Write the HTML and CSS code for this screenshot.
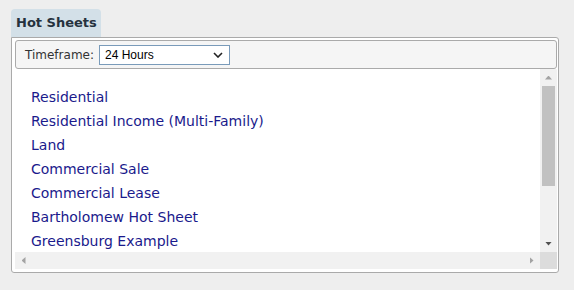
FILE: index.html
```html
<!DOCTYPE html>
<html lang="en">

<head>
    <meta charset="UTF-8">
    <meta name="viewport" content="width=device-width, initial-scale=1.0">
    <title>Hot Sheets</title>
    <link rel="stylesheet" href="styles.css">
</head>

<body>
    <div class="widget">
        <div class="tab">Hot Sheets</div>
        <div class="panel">
            <div class="toolbar">
                <label for="timeframe">Timeframe:</label>
                <div class="picker-wrap">
                    <select id="timeframe" class="picker">
                        <option>24 Hours</option>
                        <option>3 Days</option>
                        <option>7 Days</option>
                        <option>30 Days</option>
                    </select>
                    <svg class="chevron" width="10" height="6" viewBox="0 0 10 6">
                        <polyline points="1,1 5,5 9,1" fill="none" stroke="#222" stroke-width="1.6"/>
                    </svg>
                </div>
            </div>
            <div class="scroll-area">
                <div class="viewport">
                    <ul class="sheets">
                        <li><a href="#">Residential</a></li>
                        <li><a href="#">Residential Income (Multi-Family)</a></li>
                        <li><a href="#">Land</a></li>
                        <li><a href="#">Commercial Sale</a></li>
                        <li><a href="#">Commercial Lease</a></li>
                        <li><a href="#">Bartholomew Hot Sheet</a></li>
                        <li><a href="#">Greensburg Example</a></li>
                    </ul>
                </div>
                <div class="vbar">
                    <div class="sb-btn"><span class="arrow up off"></span></div>
                    <div class="sb-track">
                        <div class="sb-thumb"></div>
                    </div>
                    <div class="sb-btn"><span class="arrow down"></span></div>
                </div>
                <div class="hbar">
                    <div class="sb-btn"><span class="arrow left off"></span></div>
                    <div class="sb-track"></div>
                    <div class="sb-btn"><span class="arrow right off"></span></div>
                </div>
                <div class="sb-corner"></div>
            </div>
        </div>
    </div>
</body>

</html>
```

FILE: styles.css
```css
body {
    margin: 0;
    background-color: #eeeeee;
    font-family: "DejaVu Sans", Verdana, sans-serif;
}

.widget {
    padding: 9px 15px 0 11px;
}

.tab {
    display: inline-block;
    background-color: #d3e0e8;
    color: #26323e;
    font-size: 13px;
    font-weight: bold;
    padding: 6px 4px 6px 5px;
    border-radius: 4px 4px 0 0;
    line-height: 16px;
}

.panel {
    background-color: #fff;
    border: 1px solid #aaaaaa;
    border-radius: 0 3px 3px 3px;
    padding: 2px 1px 3px 3px;
}

.toolbar {
    background-color: #f5f5f5;
    border: 1px solid #aaaaaa;
    border-radius: 3px;
    height: 27px;
    display: flex;
    align-items: center;
    padding-left: 9px;
    font-size: 12px;
    color: #333;
}

.toolbar label {
    margin-right: 5px;
}

.picker-wrap {
    position: relative;
    height: 20px;
}

.picker {
    appearance: none;
    -webkit-appearance: none;
    width: 131px;
    height: 20px;
    margin: 0;
    padding: 0 0 0 5px;
    border: 1px solid #7a9bba;
    border-radius: 0;
    font-family: "Liberation Sans", Arial, sans-serif;
    font-size: 12px;
    background-color: #fff;
    color: #000;
}

.chevron {
    position: absolute;
    right: 7px;
    top: 7px;
    pointer-events: none;
}

/* list with its two scrollbars */
.scroll-area {
    display: grid;
    grid-template-columns: 1fr 17px;
    grid-template-rows: 183px 17px;
}

.viewport {
    overflow: hidden;
}

.sheets {
    list-style: none;
    margin: 0;
    padding: 16px 0 16px 16px;
    font-size: 14px;
    line-height: 24px;
}

.sheets a {
    color: #1a1a8c;
    text-decoration: none;
}

.vbar,
.hbar {
    display: flex;
    background-color: #f1f1f1;
}

.vbar {
    flex-direction: column;
}

.sb-btn {
    width: 17px;
    height: 17px;
    flex: none;
    display: flex;
    align-items: center;
    justify-content: center;
}

.sb-track {
    flex: 1;
}

.sb-thumb {
    height: 100px;
    margin: 0 2px;
    background-color: #c1c1c1;
}

.sb-corner {
    background-color: #dcdcdc;
}

.arrow {
    display: block;
    background-color: #505050;
}

.arrow.off {
    background-color: #a3a3a3;
}

.arrow.up,
.arrow.down {
    width: 7px;
    height: 4px;
}

.arrow.left,
.arrow.right {
    width: 4px;
    height: 7px;
}

.arrow.up {
    clip-path: polygon(50% 0, 100% 100%, 0 100%);
}

.arrow.down {
    clip-path: polygon(0 0, 100% 0, 50% 100%);
}

.arrow.left {
    clip-path: polygon(0 50%, 100% 0, 100% 100%);
}

.arrow.right {
    clip-path: polygon(0 0, 100% 50%, 0 100%);
}
```
